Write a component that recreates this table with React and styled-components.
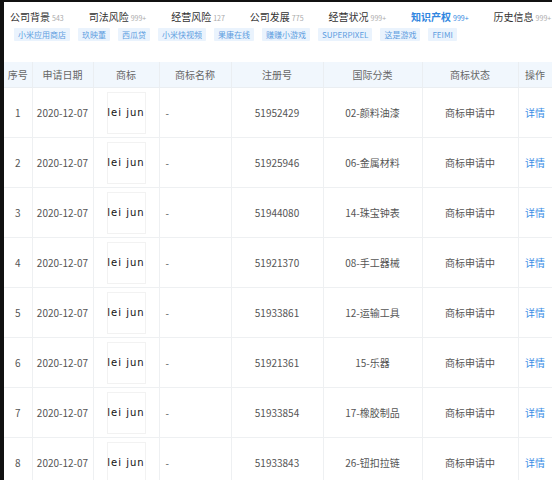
import React from 'react';
import styled, { createGlobalStyle } from 'styled-components';

const GlobalStyle = createGlobalStyle`
  html, body {
    margin: 0;
    padding: 0;
    background: #111;
  }
  body {
    font-family: "Noto Sans CJK SC", "Noto Sans", sans-serif;
    overflow: hidden;
  }
`;

const Page = styled.div`
  margin: 2px 0 0 4px;
  background: #fff;
  height: 478px;
  overflow: hidden;
`;

const TabBar = styled.div`
  display: flex;
  align-items: baseline;
  gap: 25px;
  padding: 6px 0 0 6px;
  height: 18px;
  white-space: nowrap;
`;

const Tab = styled.div`
  font-size: 10px;
  line-height: 18px;
  color: ${p => (p.active ? '#2f86e0' : '#333')};
  font-weight: ${p => (p.active ? 700 : 400)};
`;

const Count = styled.span`
  font-size: 7px;
  font-weight: 400;
  color: ${p => (p.active ? '#2f86e0' : '#aaa')};
  margin-left: 2px;
`;

const TagRow = styled.div`
  display: flex;
  gap: 8px;
  padding: 2px 0 0 10px;
`;

const Tag = styled.span`
  font-size: 8px;
  line-height: 13px;
  padding: 0 4px;
  background: #eaf3fd;
  color: #5d9ddf;
  border-radius: 1px;
`;

const Table = styled.table`
  margin-top: 21px;
  width: 100%;
  border-collapse: collapse;
  table-layout: fixed;
`;

const Th = styled.th`
  height: 25px;
  padding: 0;
  font-size: 10px;
  font-weight: 400;
  color: #666;
  background: #f1f7fd;
  border: 1px solid #eaeef2;
  border-top: none;
  text-align: center;
  &:first-child { border-left: none; }
`;

const Td = styled.td`
  height: 49px;
  padding: ${p => (p.left ? '0 0 0 6px' : '0')};
  font-size: 10px;
  color: #555;
  border: 1px solid #eef0f2;
  text-align: ${p => (p.left ? 'left' : 'center')};
  &:first-child { border-left: none; }
`;

const LogoBox = styled.div`
  width: 37px;
  height: 40px;
  margin: 0 auto;
  border: 1px solid #f2f2f2;
  display: flex;
  align-items: center;
  justify-content: center;
  font-family: "DejaVu Sans", sans-serif;
  font-size: 10px;
  color: #111;
  letter-spacing: 1px;
  white-space: nowrap;
`;

const Link = styled.span`
  color: #3a8ee6;
`;

const tabs = [
  ['公司背景', '543'],
  ['司法风险', '999+'],
  ['经营风险', '127'],
  ['公司发展', '775'],
  ['经营状况', '999+'],
  ['知识产权', '999+', true],
  ['历史信息', '999+'],
];

const tags = ['小米应用商店', '玖映董', '西瓜贷', '小米快视频', '果康在线', '赚赚小游戏', 'SUPERPIXEL', '这是游戏', 'FEIMI'];

const columns = [
  ['序号', 28],
  ['申请日期', 61],
  ['商标', 66],
  ['商标名称', 72],
  ['注册号', 92],
  ['国际分类', 99],
  ['商标状态', 96],
  ['操作', 34],
];

const rows = [
  ['51952429', '02-颜料油漆'],
  ['51925946', '06-金属材料'],
  ['51944080', '14-珠宝钟表'],
  ['51921370', '08-手工器械'],
  ['51933861', '12-运输工具'],
  ['51921361', '15-乐器'],
  ['51933854', '17-橡胶制品'],
  ['51933843', '26-钮扣拉链'],
];

const App = () => (
  <>
    <GlobalStyle />
    <Page>
      <TabBar>
        {tabs.map(([name, count, active]) => (
          <Tab key={name} active={active}>
            {name}
            <Count active={active}>{count}</Count>
          </Tab>
        ))}
      </TabBar>
      <TagRow>
        {tags.map(t => (
          <Tag key={t}>{t}</Tag>
        ))}
      </TagRow>
      <Table>
        <colgroup>
          {columns.map(([name, w]) => (
            <col key={name} style={{ width: w }} />
          ))}
        </colgroup>
        <thead>
          <tr>
            {columns.map(([name]) => (
              <Th key={name}>{name}</Th>
            ))}
          </tr>
        </thead>
        <tbody>
          {rows.map(([regNo, cls], i) => (
            <tr key={regNo}>
              <Td>{i + 1}</Td>
              <Td>2020-12-07</Td>
              <Td>
                <LogoBox>lei jun</LogoBox>
              </Td>
              <Td left>-</Td>
              <Td>{regNo}</Td>
              <Td>{cls}</Td>
              <Td>商标申请中</Td>
              <Td>
                <Link>详情</Link>
              </Td>
            </tr>
          ))}
        </tbody>
      </Table>
    </Page>
  </>
);

export default App;
